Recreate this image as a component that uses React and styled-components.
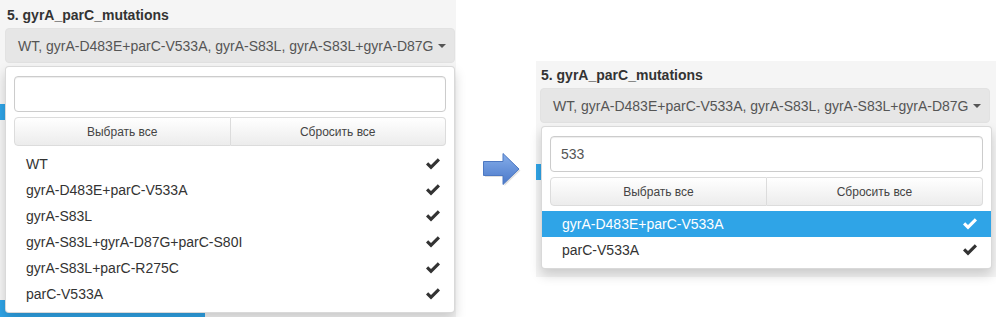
import React from 'react';
import styled, { createGlobalStyle } from 'styled-components';

const GlobalStyle = createGlobalStyle`
  html, body {
    margin: 0;
    padding: 0;
    background: #fff;
  }
  body {
    font-family: "Liberation Sans", Arial, Helvetica, sans-serif;
    font-size: 14px;
    color: #333;
  }
`;

const Page = styled.div`
  display: flex;
  align-items: flex-start;
  width: 996px;
  height: 317px;
  overflow: hidden;
`;

const Shot = styled.div`
  width: ${({ $width }) => $width}px;
  margin-top: ${({ $top }) => $top || 0}px;
  flex: none;
`;

const Well = styled.div`
  box-sizing: border-box;
  background: #f5f5f5;
  height: ${({ $height }) => $height}px;
  padding: ${({ $pad }) => `${$pad}px 0 0 ${$pad}px`};
  display: flex;
  flex-direction: column;
`;

const Label = styled.div`
  font-weight: bold;
  font-size: 14px;
  line-height: 20px;
  color: #333;
  margin-bottom: 3px;
  padding-left: ${({ $indent }) => $indent}px;
`;

const SelectWrap = styled.div`
  position: relative;
  width: 450px;
  z-index: 2;
`;

const SelectButton = styled.div`
  box-sizing: border-box;
  height: 35px;
  display: flex;
  align-items: center;
  justify-content: space-between;
  padding: 0 10px 0 12px;
  background: #e6e6e6;
  border: 1px solid #e2e2e2;
  border-radius: 4px;
  color: #555;
  font-size: 14px;
  white-space: nowrap;
`;

const Caret = styled.span`
  width: 0;
  height: 0;
  border-top: 4px solid #555;
  border-left: 4px solid transparent;
  border-right: 4px solid transparent;
  margin-left: 4px;
`;

const Menu = styled.div`
  position: absolute;
  top: calc(100% + 3px);
  left: ${({ $left }) => $left}px;
  width: ${({ $w }) => $w}px;
  box-sizing: border-box;
  background: #fff;
  border: 1px solid rgba(0, 0, 0, 0.15);
  border-radius: 4px;
  box-shadow: 0 6px 12px rgba(0, 0, 0, 0.175);
  padding: 5px 0;
`;

const SearchBox = styled.div`
  padding: 4px 8px 0;
`;

const SearchInput = styled.div`
  box-sizing: border-box;
  height: 36px;
  border: 1px solid #ccc;
  border-radius: 4px;
  box-shadow: inset 0 1px 1px rgba(0, 0, 0, 0.075);
  padding: 0 10px;
  display: flex;
  align-items: center;
  font-size: 14px;
  color: #555;
`;

const ActionsBox = styled.div`
  padding: 5px 8px;
  display: flex;
`;

const ActionButton = styled.div`
  flex: 1;
  box-sizing: border-box;
  height: 29px;
  display: flex;
  align-items: center;
  justify-content: center;
  font-size: 12px;
  color: #444;
  background: linear-gradient(#fff, #ececec);
  border: 1px solid #dcdcdc;
  border-radius: ${({ $side }) => ($side === 'left' ? '4px 0 0 4px' : '0 4px 4px 0')};
  ${({ $side }) => ($side === 'right' ? 'border-left: none;' : '')}
`;

const Item = styled.div`
  height: 26px;
  display: flex;
  align-items: center;
  justify-content: space-between;
  padding: 0 14px 0 20px;
  font-size: 14px;
  color: ${({ $active }) => ($active ? '#fff' : '#333')};
  background: ${({ $active }) => ($active ? '#2fa4e7' : 'transparent')};
`;

const Tab = styled.div`
  margin-top: 41px;
  margin-left: ${({ $pad }) => -$pad}px;
  width: 30px;
  height: 16px;
  background: #2fa4e7;
  border-radius: 0 4px 4px 0;
`;

const Footer = styled.div`
  margin-top: auto;
  margin-left: -5px;
  width: 205px;
  height: 17px;
  background: #2fa4e7;
`;

const ArrowCol = styled.div`
  width: 80px;
  flex: none;
  padding: 152px 0 0 26px;
  box-sizing: border-box;
`;

const Check = ({ color }) => (
  <svg width="14" height="12" viewBox="0 0 14 12">
    <polygon points="0,6.5 2.2,4.3 5,7.1 11.8,0.3 14,2.5 5,11.5" fill={color} />
  </svg>
);

const Arrow = () => (
  <svg width="42" height="36" viewBox="0 0 42 36">
    <defs>
      <linearGradient id="arrowFill" x1="0" y1="0" x2="0" y2="1">
        <stop offset="0" stopColor="#86aeea" />
        <stop offset="1" stopColor="#4a78c9" />
      </linearGradient>
    </defs>
    <path
      d="M1.5 9.5 H21 V1.5 L37 17 L21 32.5 V23.5 H1.5 Z"
      fill="rgba(0,0,0,0.12)"
      transform="translate(1.5,1.5)"
    />
    <path
      d="M1.5 9.5 H21 V1.5 L37 17 L21 32.5 V23.5 H1.5 Z"
      fill="url(#arrowFill)"
      stroke="#4d78c2"
      strokeWidth="1"
    />
  </svg>
);

const Dropdown = ({ items, query, menuLeft, menuWidth }) => (
  <SelectWrap>
    <SelectButton>
      <span>WT, gyrA-D483E+parC-V533A, gyrA-S83L, gyrA-S83L+gyrA-D87G</span>
      <Caret />
    </SelectButton>
    <Menu $left={menuLeft} $w={menuWidth}>
      <SearchBox>
        <SearchInput>{query}</SearchInput>
      </SearchBox>
      <ActionsBox>
        <ActionButton $side="left">Выбрать все</ActionButton>
        <ActionButton $side="right">Сбросить все</ActionButton>
      </ActionsBox>
      {items.map((it) => (
        <Item key={it.label} $active={it.active}>
          <span>{it.label}</span>
          <Check color={it.active ? '#fff' : '#333'} />
        </Item>
      ))}
    </Menu>
  </SelectWrap>
);

const allItems = [
  { label: 'WT' },
  { label: 'gyrA-D483E+parC-V533A' },
  { label: 'gyrA-S83L' },
  { label: 'gyrA-S83L+gyrA-D87G+parC-S80I' },
  { label: 'gyrA-S83L+parC-R275C' },
  { label: 'parC-V533A' },
];

const filtered = [
  { label: 'gyrA-D483E+parC-V533A', active: true },
  { label: 'parC-V533A' },
];

const App = () => (
  <>
    <GlobalStyle />
    <Page>
      <Shot $width={456}>
        <Well $height={317} $pad={5}>
          <Label $indent={2}>5. gyrA_parC_mutations</Label>
          <Dropdown items={allItems} query="" menuLeft={0} menuWidth={450} />
          <Tab $pad={5} />
          <Footer />
        </Well>
      </Shot>
      <ArrowCol>
        <Arrow />
      </ArrowCol>
      <Shot $width={460} $top={61}>
        <Well $height={216} $pad={4}>
          <Label $indent={1}>5. gyrA_parC_mutations</Label>
          <Dropdown items={filtered} query="533" menuLeft={1} menuWidth={451} />
          <Tab $pad={4} />
        </Well>
      </Shot>
    </Page>
  </>
);

export default App;
